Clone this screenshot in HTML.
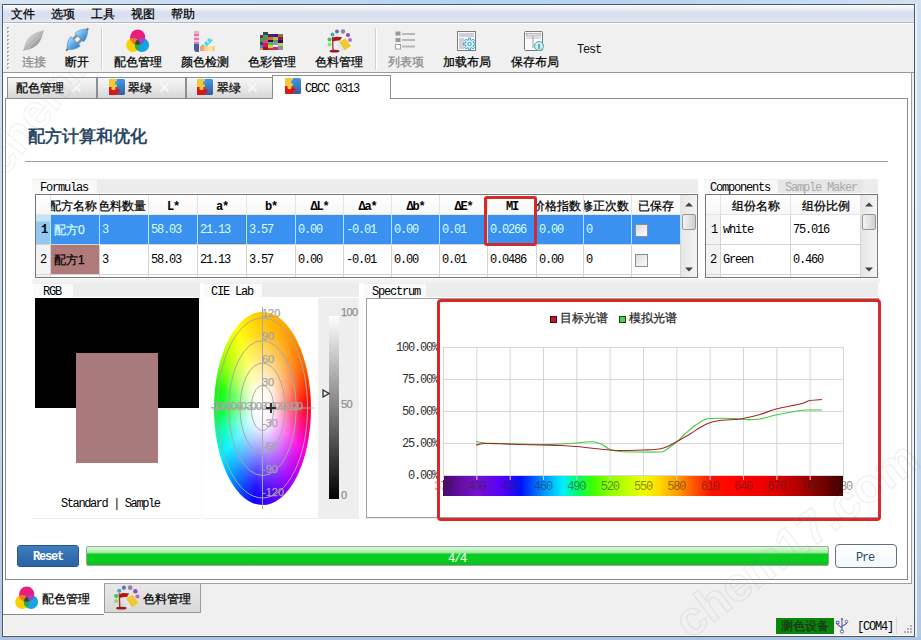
<!DOCTYPE html>
<html><head><meta charset="utf-8">
<style>
*{margin:0;padding:0;box-sizing:border-box}
html,body{width:921px;height:640px;overflow:hidden}
body{position:relative;background:#cfe0f2;font-family:"Liberation Sans",sans-serif;font-size:12px;color:#000}
.a{position:absolute}
.m{font-family:"Liberation Mono",monospace;-webkit-text-stroke:0 !important}
.t{white-space:nowrap;line-height:1;-webkit-text-stroke:0.25px currentColor}
</style></head><body>
<!-- window frame -->
<div class="a" style="left:0;top:0;width:921px;height:640px;background:linear-gradient(#cfe0f2 0,#c8dcf0 60%,#b0c8e4 100%)"></div>
<div class="a" style="left:0;top:0;width:921px;height:4px;background:linear-gradient(90deg,#d6e6f4 0,#c2daf2 25%,#b4d4f6 50%,#bcd6f2 75%,#d0e2f4 100%)"></div>
<div class="a" style="left:0;top:637px;width:921px;height:3px;background:#a8c4e2"></div>
<div class="a" style="left:2px;top:4px;width:913px;height:633px;border:1px solid #4e5a66;background:#f0f0f0;box-shadow:inset 1px 0 0 #fcfcfc,inset 0 -1px 0 #fafafa"></div>
<div class="a" style="left:915px;top:4px;width:2px;height:633px;background:#e6f2fc"></div>
<!-- menu bar -->
<div class="a" style="left:3px;top:5px;width:911px;height:17px;background:linear-gradient(#fbfbfd 0,#f2f3f9 3px,#dfe3f1 6px,#d6ddee 9px,#dce1f0 13px,#e6e9f4 17px)"></div>
<div class="a" style="left:3px;top:22px;width:911px;height:1px;background:#b4b8c4"></div>
<div class="a" style="left:3px;top:23px;width:911px;height:1px;background:#fcfcfc"></div>
<div class="a t" style="left:11px;top:8px">文件</div><div class="a t" style="left:51px;top:8px">选项</div><div class="a t" style="left:91px;top:8px">工具</div><div class="a t" style="left:131px;top:8px">视图</div><div class="a t" style="left:171px;top:8px">帮助</div>
<!-- toolbar -->
<div class="a" style="left:3px;top:72px;width:911px;height:1px;background:#9a9a9a"></div>
<div class="a" style="left:7px;top:27px;width:2px;height:44px;background:repeating-linear-gradient(#a4a4a4 0 2px,transparent 2px 4px)"></div>
<div class="a" style="left:8px;top:28px;width:2px;height:44px;background:repeating-linear-gradient(rgba(255,255,255,.8) 0 1px,transparent 1px 4px)"></div>
<div class="a" style="left:101px;top:28px;width:1px;height:42px;background:#d2d2d2"></div><div class="a" style="left:102px;top:28px;width:1px;height:42px;background:#fff"></div>
<div class="a" style="left:375px;top:28px;width:1px;height:42px;background:#d2d2d2"></div><div class="a" style="left:376px;top:28px;width:1px;height:42px;background:#fff"></div>
<div class="a t" style="left:22px;top:56px;color:#8a8a8a">连接</div>
<div class="a t" style="left:65px;top:56px;color:#000">断开</div>
<div class="a t" style="left:114px;top:56px;color:#000">配色管理</div>
<div class="a t" style="left:181px;top:56px;color:#000">颜色检测</div>
<div class="a t" style="left:248px;top:56px;color:#000">色彩管理</div>
<div class="a t" style="left:315px;top:56px;color:#000">色料管理</div>
<div class="a t" style="left:388px;top:56px;color:#8a8a8a">列表项</div>
<div class="a t" style="left:443px;top:56px;color:#000">加载布局</div>
<div class="a t" style="left:511px;top:56px;color:#000">保存布局</div>
<div class="a t m" style="left:577px;top:44px;font-size:12px;font-weight:normal;letter-spacing:-1.2px;color:#101010">Test</div>
<svg class="a" style="left:15px;top:24px" width="80" height="32" viewBox="15 24 80 32">
<defs><linearGradient id="gl" x1="0" y1="0" x2="0" y2="1"><stop offset="0" stop-color="#d0d0d0"/><stop offset=".5" stop-color="#b4b4b4"/><stop offset="1" stop-color="#9c9c9c"/></linearGradient>
<linearGradient id="gb" x1="0" y1="0" x2="0" y2="1"><stop offset="0" stop-color="#a8d8fa"/><stop offset=".5" stop-color="#62acea"/><stop offset="1" stop-color="#3a80c8"/></linearGradient></defs>
<g transform="translate(33.5 40.5) rotate(-45)"><path d="M-15,0 C-11,-1 -8,-5.5 0,-5.5 C7,-5.5 10,-2 15,0 C10,2 7,5.5 0,5.5 C-8,5.5 -11,1 -15,0Z" fill="url(#gl)"/>
<path d="M-11 -1.5 H10 M-10 1.5 H11" stroke="#c8c8c8" stroke-width=".8"/></g>
<g transform="translate(77 39.75) rotate(-45)">
<rect x="-3" y="-4.5" width="7" height="2.6" fill="#8c8c8c"/><rect x="-3" y="1.9" width="7" height="2.6" fill="#8c8c8c"/>
<path d="M3,-6 L3,6 C8,6 12,3 14,1 L15.5,0 L14,-1 C12,-3 8,-6 3,-6Z" fill="url(#gb)" stroke="#4a88c0" stroke-width=".6"/>
<path d="M-2,-6.5 L-2,6.5 C-7,6.5 -11,3 -13,1 L-15,0 L-13,-1 C-11,-3 -7,-6.5 -2,-6.5Z" fill="url(#gb)" stroke="#4a88c0" stroke-width=".6"/>
<path d="M14 0 H16" stroke="#607080" stroke-width="1.6"/><path d="M-13.5 0 H-15.5" stroke="#607080" stroke-width="1.6"/>
</g>
</svg>

<svg class="a" style="left:125px;top:28px" width="26" height="25" viewBox="0 0 26 25">
<defs><clipPath id="cm"><circle cx="12.7" cy="9.2" r="7.6"/></clipPath><clipPath id="cy"><circle cx="8.2" cy="17" r="7.1"/></clipPath></defs>
<circle cx="8.2" cy="17" r="7.1" fill="#fcd000"/>
<circle cx="17" cy="17" r="7.1" fill="#16a4e4"/>
<circle cx="12.7" cy="9.2" r="7.6" fill="#ea1e7e"/>
<g clip-path="url(#cm)"><circle cx="8.2" cy="17" r="7.1" fill="#f47a20"/><circle cx="17" cy="17" r="7.1" fill="#9a48c8"/></g>
<g clip-path="url(#cy)"><circle cx="17" cy="17" r="7.1" fill="#20b048"/></g>
<g clip-path="url(#cm)"><g clip-path="url(#cy)"><circle cx="17" cy="17" r="7.1" fill="#404040"/></g></g>
</svg>
<svg class="a" style="left:192px;top:30px" width="26" height="23" viewBox="0 0 26 23">
<path d="M2 1 H7 V22 H5.5 C3 22 2 20.5 2 18 Z" fill="#e07ab0"/>
<rect x="2" y="1" width="5" height="3" fill="#f0a8cc"/><rect x="2" y="6" width="5" height="2" fill="#f6c6dc"/><rect x="2" y="10" width="5" height="2" fill="#f6c6dc"/>
<path d="M2 14 H7 V22 H5.5 C3 22 2 20.5 2 18 Z" fill="#4a5aa0"/>
<path d="M8 17 L18 7 L21 10 L11 20 Z" fill="#58d0e6"/>
<path d="M10.5 12.5 L13.5 15.5 M13.5 9.5 L16.5 12.5 M16.5 6.5 L19.5 9.5" stroke="#e8f8fc" stroke-width="1.2"/>
<rect x="8" y="16" width="15" height="5" fill="#f8d090"/><rect x="8" y="16" width="4" height="5" fill="#f4a070"/><rect x="16" y="16" width="4" height="5" fill="#f8e8a0"/>
</svg>
<svg class="a" style="left:258px;top:30px" width="28" height="22" viewBox="258 30 28 22"><rect x="260" y="35" width="3" height="3" fill="#8a2060"/><rect x="260" y="38" width="3" height="4" fill="#40a040"/><rect x="260" y="42" width="3" height="3" fill="#206040"/><rect x="260" y="45" width="3" height="3" fill="#4090d0"/><rect x="260" y="48" width="3" height="2" fill="#d8a050"/><rect x="263" y="32" width="5" height="3" fill="#305040"/><rect x="263" y="35" width="5" height="5" fill="#40a050"/><rect x="263" y="40" width="5" height="3" fill="#e040a0"/><rect x="263" y="43" width="5" height="4" fill="#e01060"/><rect x="263" y="47" width="5" height="3" fill="#a01020"/><rect x="268" y="34" width="5" height="3" fill="#502070"/><rect x="268" y="37" width="5" height="3" fill="#e06030"/><rect x="268" y="40" width="5" height="2" fill="#400820"/><rect x="268" y="42" width="5" height="3" fill="#40c070"/><rect x="268" y="45" width="5" height="3" fill="#d0d030"/><rect x="268" y="48" width="5" height="2" fill="#c04020"/><rect x="273" y="34" width="5" height="3" fill="#4010a0"/><rect x="273" y="37" width="5" height="3" fill="#b0c040"/><rect x="273" y="40" width="5" height="2" fill="#40b040"/><rect x="273" y="42" width="5" height="3" fill="#b080d0"/><rect x="273" y="45" width="5" height="2" fill="#e8e8f8"/><rect x="273" y="47" width="5" height="3" fill="#c03060"/><rect x="278" y="34" width="5" height="3" fill="#907040"/><rect x="278" y="37" width="5" height="3" fill="#802040"/><rect x="278" y="40" width="5" height="3" fill="#400060"/><rect x="278" y="43" width="5" height="3" fill="#a0e060"/><rect x="278" y="46" width="5" height="4" fill="#909090"/></svg>
<svg class="a" style="left:326px;top:28px" width="26" height="25" viewBox="0 0 26 25"><circle cx="6.5" cy="6.5" r="2" fill="#4aa8b0"/><circle cx="11" cy="3.5" r="2" fill="#6a70a8"/><circle cx="17" cy="3.5" r="2.2" fill="#8a84a8"/><circle cx="22" cy="7" r="2.1" fill="#8a50b8"/><circle cx="24" cy="12" r="2" fill="#b070c0"/>
<circle cx="3.5" cy="11.5" r="2" fill="#40c060"/><circle cx="3.5" cy="16.5" r="2" fill="#90e060"/>
<path d="M6.5 9 L7 22" stroke="#983030" stroke-width="1.3"/>
<path d="M7 9.5 C10 8 13 9 16 9 L14 12.5 C11 12.5 9 12.5 7 13.5 Z" fill="#b81414"/>
<path d="M13 14 L19.5 10.5 L25 18 L18.5 22.5 Z" fill="#f0c830"/><path d="M13 14 L18.5 22.5 L15 23.5 L10.5 16Z" fill="#e4e4ec"/>
<ellipse cx="8.5" cy="23.2" rx="5" ry="1.4" fill="#a01424"/></svg>
<svg class="a" style="left:394px;top:30px" width="23" height="21" viewBox="0 0 23 21">
<rect x="1.5" y="1.5" width="5" height="4" fill="#9a9a9a"/><rect x="1.5" y="8" width="5" height="4" fill="#9a9a9a"/><rect x="1.5" y="14.5" width="5" height="4.5" fill="#fff" stroke="#a0a0a0"/>
<rect x="8" y="3" width="13" height="2" fill="#b8b8b8"/><rect x="8" y="9" width="13" height="2" fill="#b8b8b8"/><rect x="8" y="15.5" width="13" height="2" fill="#b8b8b8"/>
</svg>
<svg class="a" style="left:456px;top:30px" width="22" height="22" viewBox="0 0 22 22">
<rect x="1.5" y="1.5" width="18" height="19" fill="#fafafa" stroke="#7c7c7c"/>
<rect x="3" y="3" width="15" height="4" fill="#cfcfdc"/><rect x="3" y="8" width="5" height="11" fill="#cfcfdc"/>
<path d="M17.79 13.04 L19.42 13.04 L19.42 14.96 L17.79 14.96 L17.22 16.36 L18.36 17.51 L17.01 18.86 L15.86 17.72 L14.46 18.29 L14.46 19.92 L12.54 19.92 L12.54 18.29 L11.14 17.72 L9.99 18.86 L8.64 17.51 L9.78 16.36 L9.21 14.96 L7.58 14.96 L7.58 13.04 L9.21 13.04 L9.78 11.64 L8.64 10.49 L9.99 9.14 L11.14 10.28 L12.54 9.71 L12.54 8.08 L14.46 8.08 L14.46 9.71 L15.86 10.28 L17.01 9.14 L18.36 10.49 L17.22 11.64Z" fill="#d2f0fa" stroke="#3a9cc0" stroke-width="1"/>
<circle cx="13.5" cy="14" r="1.7" fill="#fff" stroke="#3a9cc0" stroke-width="1"/>
</svg>
<svg class="a" style="left:523px;top:30px" width="23" height="22" viewBox="0 0 23 22">
<rect x="1.5" y="1.5" width="18" height="19" rx="1" fill="#fafafa" stroke="#7a7a7a"/>
<rect x="3.5" y="3.5" width="14" height="2.5" fill="#e0e0e8" stroke="#9a9a9a" stroke-width=".6"/><path d="M10 6 V18" stroke="#9a9a9a"/><path d="M3.5 8 H17.5" stroke="#9a9a9a" stroke-width=".6"/>
<circle cx="16" cy="16" r="4.5" fill="#c8f0f0" stroke="#50a8a8"/><path d="M16 14 V19" stroke="#407878" stroke-width="1.2"/>
</svg>
<!-- main white area -->
<div class="a" style="left:3px;top:73px;width:909px;height:511px;background:#fff;border-right:1px solid #a0a0a0;border-bottom:1px solid #a0a0a0"></div>

<div class="a" style="left:5px;top:98px;width:903px;height:482px;border:1px solid #8a8a8a;background:#fff"></div>
<div class="a" style="left:7px;top:77px;width:90px;height:21px;border:1px solid #8c8e94;border-bottom:none;background:linear-gradient(#f6f6f6,#e8e8e8 50%,#d6d6d6)"><div class="a t" style="left:8px;top:4px">配色管理</div></div>
<div class="a" style="left:97px;top:77px;width:89px;height:21px;border:1px solid #8c8e94;border-bottom:none;background:linear-gradient(#f6f6f6,#e8e8e8 50%,#d6d6d6)"><div class="a t" style="left:30px;top:4px">翠绿</div></div>
<svg class="a" style="left:109px;top:79px" width="16" height="16" viewBox="0 0 16 16">
<defs><clipPath id="pz1"><rect x="0" y="0" width="16" height="16" rx="1.5"/></clipPath><linearGradient id="pb1" x1="0" y1="0" x2="0" y2="1"><stop offset="0" stop-color="#3a9ae0"/><stop offset="1" stop-color="#3a5aa8"/></linearGradient></defs>
<g clip-path="url(#pz1)">
<rect x="0" y="0" width="16" height="16" fill="url(#pb1)"/>
<rect x="0" y="0" width="8" height="8" fill="#f4c838"/>
<rect x="0" y="8" width="8" height="8" fill="#d81818"/>
<circle cx="4.5" cy="9" r="2.2" fill="#f4c838"/>
<circle cx="8.5" cy="12" r="2" fill="#d81818"/>
<circle cx="8" cy="4" r="2" fill="#3a96dc"/>
</g></svg>
<div class="a" style="left:186px;top:77px;width:87px;height:21px;border:1px solid #8c8e94;border-bottom:none;background:linear-gradient(#f6f6f6,#e8e8e8 50%,#d6d6d6)"><div class="a t" style="left:30px;top:4px">翠绿</div></div>
<svg class="a" style="left:197px;top:79px" width="16" height="16" viewBox="0 0 16 16">
<defs><clipPath id="pz2"><rect x="0" y="0" width="16" height="16" rx="1.5"/></clipPath><linearGradient id="pb2" x1="0" y1="0" x2="0" y2="1"><stop offset="0" stop-color="#3a9ae0"/><stop offset="1" stop-color="#3a5aa8"/></linearGradient></defs>
<g clip-path="url(#pz2)">
<rect x="0" y="0" width="16" height="16" fill="url(#pb2)"/>
<rect x="0" y="0" width="8" height="8" fill="#f4c838"/>
<rect x="0" y="8" width="8" height="8" fill="#d81818"/>
<circle cx="4.5" cy="9" r="2.2" fill="#f4c838"/>
<circle cx="8.5" cy="12" r="2" fill="#d81818"/>
<circle cx="8" cy="4" r="2" fill="#3a96dc"/>
</g></svg>
<svg class="a" style="left:71px;top:82px" width="11" height="11"><path d="M1.5 1.5 L9.5 9.5 M9.5 1.5 L1.5 9.5" stroke="#fbfbfb" stroke-width="1.5"/></svg><svg class="a" style="left:159px;top:82px" width="11" height="11"><path d="M1.5 1.5 L9.5 9.5 M9.5 1.5 L1.5 9.5" stroke="#fbfbfb" stroke-width="1.5"/></svg><svg class="a" style="left:247px;top:82px" width="11" height="11"><path d="M1.5 1.5 L9.5 9.5 M9.5 1.5 L1.5 9.5" stroke="#fbfbfb" stroke-width="1.5"/></svg><div class="a" style="left:272px;top:75px;width:119px;height:24px;border:1px solid #8c8e94;border-bottom:none;background:#fff"></div>
<svg class="a" style="left:285px;top:78px" width="16" height="16" viewBox="0 0 16 16">
<defs><clipPath id="pz3"><rect x="0" y="0" width="16" height="16" rx="1.5"/></clipPath><linearGradient id="pb3" x1="0" y1="0" x2="0" y2="1"><stop offset="0" stop-color="#3a9ae0"/><stop offset="1" stop-color="#3a5aa8"/></linearGradient></defs>
<g clip-path="url(#pz3)">
<rect x="0" y="0" width="16" height="16" fill="url(#pb3)"/>
<rect x="0" y="0" width="8" height="8" fill="#f4c838"/>
<rect x="0" y="8" width="8" height="8" fill="#d81818"/>
<circle cx="4.5" cy="9" r="2.2" fill="#f4c838"/>
<circle cx="8.5" cy="12" r="2" fill="#d81818"/>
<circle cx="8" cy="4" r="2" fill="#3a96dc"/>
</g></svg>
<div class="a t m" style="left:305px;top:83px;font-size:12px;letter-spacing:-1.2px">CBCC 0313</div>
<div class="a t" style="left:28px;top:128px;font-size:17px;font-weight:bold;color:#2a4866;letter-spacing:0px;-webkit-text-stroke:0">配方计算和优化</div>
<div class="a" style="left:25px;top:161px;width:863px;height:1px;background:#9c9c9c"></div>
<div class="a" style="left:32px;top:179px;width:666px;height:1px;background:#ececec"></div>
<div class="a" style="left:32px;top:180px;width:666px;height:13px;background:#ececec"></div>
<div class="a" style="left:32px;top:180px;width:65px;height:13px;background:#f9f9f9"></div>
<div class="a t" style="left:40px;top:182px;font-family:'Liberation Mono',monospace;letter-spacing:-1.2px;font-size:12px;-webkit-text-stroke:0">Formulas</div>
<div class="a" style="left:704px;top:179px;width:174px;height:1px;background:#ececec"></div>
<div class="a" style="left:704px;top:180px;width:174px;height:13px;background:#ececec"></div>
<div class="a" style="left:704px;top:180px;width:73px;height:13px;background:#f9f9f9"></div>
<div class="a t" style="left:710px;top:182px;font-family:'Liberation Mono',monospace;letter-spacing:-1.2px;font-size:12px;-webkit-text-stroke:0">Components</div>
<div class="a" style="left:779px;top:180px;width:84px;height:13px;background:#e6e6e6"></div>
<div class="a t" style="left:785px;top:182px;font-family:'Liberation Mono',monospace;letter-spacing:-1.2px;font-size:12px;-webkit-text-stroke:0;color:#a8a8a8">Sample Maker</div>
<div class="a" style="left:35px;top:194px;width:663px;height:84px;border:1px solid #767676;background:#fff"></div>
<div class="a" style="left:36px;top:195px;width:644px;height:19px;background:linear-gradient(#fff,#f7f7f7)"></div>
<div class="a" style="left:36px;top:214px;width:644px;height:1px;background:#dfe6ee"></div>
<div class="a" style="left:36px;top:215px;width:14px;height:62px;background:#f3f3f3"></div>
<div class="a" style="left:50px;top:215px;width:630px;height:29px;background:#3b91ef"></div>
<div class="a" style="left:36px;top:215px;width:14px;height:29px;background:linear-gradient(#c6e3f8 0,#c6e3f8 6px,#93c9f0 7px,#93c9f0)"></div>
<div class="a" style="left:36px;top:244px;width:644px;height:1px;background:#d4d4d4"></div>
<div class="a t" style="left:41px;top:224px;font-family:'Liberation Mono',monospace;letter-spacing:-1.2px;font-size:12px;-webkit-text-stroke:0;font-weight:bold">1</div>
<div class="a t" style="left:54px;top:224px;color:#d2ffff">配方0</div>
<div class="a t" style="left:102px;top:224px;font-family:'Liberation Mono',monospace;letter-spacing:-1.2px;font-size:12px;-webkit-text-stroke:0;color:#d2ffff">3</div>
<div class="a t" style="left:151px;top:224px;font-family:'Liberation Mono',monospace;letter-spacing:-1.2px;font-size:12px;-webkit-text-stroke:0;color:#d2ffff">58.03</div>
<div class="a t" style="left:200px;top:224px;font-family:'Liberation Mono',monospace;letter-spacing:-1.2px;font-size:12px;-webkit-text-stroke:0;color:#d2ffff">21.13</div>
<div class="a t" style="left:249px;top:224px;font-family:'Liberation Mono',monospace;letter-spacing:-1.2px;font-size:12px;-webkit-text-stroke:0;color:#d2ffff">3.57</div>
<div class="a t" style="left:298px;top:224px;font-family:'Liberation Mono',monospace;letter-spacing:-1.2px;font-size:12px;-webkit-text-stroke:0;color:#d2ffff">0.00</div>
<div class="a t" style="left:346px;top:224px;font-family:'Liberation Mono',monospace;letter-spacing:-1.2px;font-size:12px;-webkit-text-stroke:0;color:#d2ffff">-0.01</div>
<div class="a t" style="left:394px;top:224px;font-family:'Liberation Mono',monospace;letter-spacing:-1.2px;font-size:12px;-webkit-text-stroke:0;color:#d2ffff">0.00</div>
<div class="a t" style="left:442px;top:224px;font-family:'Liberation Mono',monospace;letter-spacing:-1.2px;font-size:12px;-webkit-text-stroke:0;color:#d2ffff">0.01</div>
<div class="a t" style="left:490px;top:224px;font-family:'Liberation Mono',monospace;letter-spacing:-1.2px;font-size:12px;-webkit-text-stroke:0;color:#d2ffff">0.0266</div>
<div class="a t" style="left:539px;top:224px;font-family:'Liberation Mono',monospace;letter-spacing:-1.2px;font-size:12px;-webkit-text-stroke:0;color:#d2ffff">0.00</div>
<div class="a t" style="left:586px;top:224px;font-family:'Liberation Mono',monospace;letter-spacing:-1.2px;font-size:12px;-webkit-text-stroke:0;color:#d2ffff">0</div>
<div class="a" style="left:635px;top:224px;width:13px;height:13px;border:1px solid #8e8f8f;background:linear-gradient(135deg,#dcdcdc,#fbfbfb)"></div>
<div class="a" style="left:198px;top:215px;width:48px;height:29px;border:1px solid #4f7fb4"></div>
<div class="a" style="left:36px;top:274px;width:644px;height:1px;background:#d4d4d4"></div>
<div class="a t" style="left:40px;top:254px;font-family:'Liberation Mono',monospace;letter-spacing:-1.2px;font-size:12px;-webkit-text-stroke:0;font-weight:normal">2</div>
<div class="a" style="left:51px;top:245px;width:48px;height:29px;background:#b07a7b"></div>
<div class="a t" style="left:54px;top:254px;color:#000">配方1</div>
<div class="a t" style="left:102px;top:254px;font-family:'Liberation Mono',monospace;letter-spacing:-1.2px;font-size:12px;-webkit-text-stroke:0;color:#000">3</div>
<div class="a t" style="left:151px;top:254px;font-family:'Liberation Mono',monospace;letter-spacing:-1.2px;font-size:12px;-webkit-text-stroke:0;color:#000">58.03</div>
<div class="a t" style="left:200px;top:254px;font-family:'Liberation Mono',monospace;letter-spacing:-1.2px;font-size:12px;-webkit-text-stroke:0;color:#000">21.13</div>
<div class="a t" style="left:249px;top:254px;font-family:'Liberation Mono',monospace;letter-spacing:-1.2px;font-size:12px;-webkit-text-stroke:0;color:#000">3.57</div>
<div class="a t" style="left:298px;top:254px;font-family:'Liberation Mono',monospace;letter-spacing:-1.2px;font-size:12px;-webkit-text-stroke:0;color:#000">0.00</div>
<div class="a t" style="left:346px;top:254px;font-family:'Liberation Mono',monospace;letter-spacing:-1.2px;font-size:12px;-webkit-text-stroke:0;color:#000">-0.01</div>
<div class="a t" style="left:394px;top:254px;font-family:'Liberation Mono',monospace;letter-spacing:-1.2px;font-size:12px;-webkit-text-stroke:0;color:#000">0.00</div>
<div class="a t" style="left:442px;top:254px;font-family:'Liberation Mono',monospace;letter-spacing:-1.2px;font-size:12px;-webkit-text-stroke:0;color:#000">0.01</div>
<div class="a t" style="left:490px;top:254px;font-family:'Liberation Mono',monospace;letter-spacing:-1.2px;font-size:12px;-webkit-text-stroke:0;color:#000">0.0486</div>
<div class="a t" style="left:539px;top:254px;font-family:'Liberation Mono',monospace;letter-spacing:-1.2px;font-size:12px;-webkit-text-stroke:0;color:#000">0.00</div>
<div class="a t" style="left:586px;top:254px;font-family:'Liberation Mono',monospace;letter-spacing:-1.2px;font-size:12px;-webkit-text-stroke:0;color:#000">0</div>
<div class="a" style="left:635px;top:254px;width:13px;height:13px;border:1px solid #8e8f8f;background:linear-gradient(135deg,#dcdcdc,#fbfbfb)"></div>
<div class="a" style="left:50px;top:195px;width:1px;height:20px;background:#e4e4e4"></div>
<div class="a" style="left:50px;top:215px;width:1px;height:62px;background:#d4d4d4"></div>
<div class="a" style="left:50px;top:215px;width:1px;height:29px;background:#aeeaff"></div>
<div class="a" style="left:99px;top:195px;width:1px;height:20px;background:#e4e4e4"></div>
<div class="a" style="left:99px;top:215px;width:1px;height:62px;background:#d4d4d4"></div>
<div class="a" style="left:99px;top:215px;width:1px;height:29px;background:#aeeaff"></div>
<div class="a" style="left:148px;top:195px;width:1px;height:20px;background:#e4e4e4"></div>
<div class="a" style="left:148px;top:215px;width:1px;height:62px;background:#d4d4d4"></div>
<div class="a" style="left:148px;top:215px;width:1px;height:29px;background:#aeeaff"></div>
<div class="a" style="left:197px;top:195px;width:1px;height:20px;background:#e4e4e4"></div>
<div class="a" style="left:197px;top:215px;width:1px;height:62px;background:#d4d4d4"></div>
<div class="a" style="left:197px;top:215px;width:1px;height:29px;background:#aeeaff"></div>
<div class="a" style="left:246px;top:195px;width:1px;height:20px;background:#e4e4e4"></div>
<div class="a" style="left:246px;top:215px;width:1px;height:62px;background:#d4d4d4"></div>
<div class="a" style="left:246px;top:215px;width:1px;height:29px;background:#aeeaff"></div>
<div class="a" style="left:295px;top:195px;width:1px;height:20px;background:#e4e4e4"></div>
<div class="a" style="left:295px;top:215px;width:1px;height:62px;background:#d4d4d4"></div>
<div class="a" style="left:295px;top:215px;width:1px;height:29px;background:#aeeaff"></div>
<div class="a" style="left:343px;top:195px;width:1px;height:20px;background:#e4e4e4"></div>
<div class="a" style="left:343px;top:215px;width:1px;height:62px;background:#d4d4d4"></div>
<div class="a" style="left:343px;top:215px;width:1px;height:29px;background:#aeeaff"></div>
<div class="a" style="left:391px;top:195px;width:1px;height:20px;background:#e4e4e4"></div>
<div class="a" style="left:391px;top:215px;width:1px;height:62px;background:#d4d4d4"></div>
<div class="a" style="left:391px;top:215px;width:1px;height:29px;background:#aeeaff"></div>
<div class="a" style="left:439px;top:195px;width:1px;height:20px;background:#e4e4e4"></div>
<div class="a" style="left:439px;top:215px;width:1px;height:62px;background:#d4d4d4"></div>
<div class="a" style="left:439px;top:215px;width:1px;height:29px;background:#aeeaff"></div>
<div class="a" style="left:487px;top:195px;width:1px;height:20px;background:#e4e4e4"></div>
<div class="a" style="left:487px;top:215px;width:1px;height:62px;background:#d4d4d4"></div>
<div class="a" style="left:487px;top:215px;width:1px;height:29px;background:#aeeaff"></div>
<div class="a" style="left:536px;top:195px;width:1px;height:20px;background:#e4e4e4"></div>
<div class="a" style="left:536px;top:215px;width:1px;height:62px;background:#d4d4d4"></div>
<div class="a" style="left:536px;top:215px;width:1px;height:29px;background:#aeeaff"></div>
<div class="a" style="left:583px;top:195px;width:1px;height:20px;background:#e4e4e4"></div>
<div class="a" style="left:583px;top:215px;width:1px;height:62px;background:#d4d4d4"></div>
<div class="a" style="left:583px;top:215px;width:1px;height:29px;background:#aeeaff"></div>
<div class="a" style="left:631px;top:195px;width:1px;height:20px;background:#e4e4e4"></div>
<div class="a" style="left:631px;top:215px;width:1px;height:62px;background:#d4d4d4"></div>
<div class="a" style="left:631px;top:215px;width:1px;height:29px;background:#aeeaff"></div>
<div class="a" style="left:680px;top:195px;width:1px;height:20px;background:#e4e4e4"></div>
<div class="a" style="left:680px;top:215px;width:1px;height:62px;background:#d4d4d4"></div>
<div class="a" style="left:680px;top:215px;width:1px;height:29px;background:#aeeaff"></div>
<div class="a" style="left:51px;top:195px;width:48px;height:19px;overflow:hidden"><div class="t" style="position:absolute;right:2px;top:5px">配方名称</div></div>
<div class="a" style="left:100px;top:195px;width:48px;height:19px;overflow:hidden"><div class="t" style="position:absolute;right:2px;top:5px">色料数量</div></div>
<div class="a" style="left:149px;top:195px;width:48px;height:19px;overflow:hidden"><div class="t" style="position:absolute;left:50%;top:6px;transform:translateX(-50%);font-family:'Liberation Mono',monospace;letter-spacing:-1.2px;font-size:12px;-webkit-text-stroke:0;font-weight:bold">L*</div></div>
<div class="a" style="left:198px;top:195px;width:48px;height:19px;overflow:hidden"><div class="t" style="position:absolute;left:50%;top:6px;transform:translateX(-50%);font-family:'Liberation Mono',monospace;letter-spacing:-1.2px;font-size:12px;-webkit-text-stroke:0;font-weight:bold">a*</div></div>
<div class="a" style="left:247px;top:195px;width:48px;height:19px;overflow:hidden"><div class="t" style="position:absolute;left:50%;top:6px;transform:translateX(-50%);font-family:'Liberation Mono',monospace;letter-spacing:-1.2px;font-size:12px;-webkit-text-stroke:0;font-weight:bold">b*</div></div>
<div class="a" style="left:296px;top:195px;width:47px;height:19px;overflow:hidden"><div class="t" style="position:absolute;left:50%;top:6px;transform:translateX(-50%);font-family:'Liberation Mono',monospace;letter-spacing:-1.2px;font-size:12px;-webkit-text-stroke:0;font-weight:bold">ΔL*</div></div>
<div class="a" style="left:344px;top:195px;width:47px;height:19px;overflow:hidden"><div class="t" style="position:absolute;left:50%;top:6px;transform:translateX(-50%);font-family:'Liberation Mono',monospace;letter-spacing:-1.2px;font-size:12px;-webkit-text-stroke:0;font-weight:bold">Δa*</div></div>
<div class="a" style="left:392px;top:195px;width:47px;height:19px;overflow:hidden"><div class="t" style="position:absolute;left:50%;top:6px;transform:translateX(-50%);font-family:'Liberation Mono',monospace;letter-spacing:-1.2px;font-size:12px;-webkit-text-stroke:0;font-weight:bold">Δb*</div></div>
<div class="a" style="left:440px;top:195px;width:47px;height:19px;overflow:hidden"><div class="t" style="position:absolute;left:50%;top:6px;transform:translateX(-50%);font-family:'Liberation Mono',monospace;letter-spacing:-1.2px;font-size:12px;-webkit-text-stroke:0;font-weight:bold">ΔE*</div></div>
<div class="a" style="left:488px;top:195px;width:48px;height:19px;overflow:hidden"><div class="t" style="position:absolute;left:50%;top:6px;transform:translateX(-50%);font-family:'Liberation Mono',monospace;letter-spacing:-1.2px;font-size:12px;-webkit-text-stroke:0;font-weight:bold">MI</div></div>
<div class="a" style="left:537px;top:195px;width:46px;height:19px;overflow:hidden"><div class="t" style="position:absolute;right:2px;top:5px">价格指数</div></div>
<div class="a" style="left:584px;top:195px;width:47px;height:19px;overflow:hidden"><div class="t" style="position:absolute;right:2px;top:5px">修正次数</div></div>
<div class="a" style="left:632px;top:195px;width:48px;height:19px;overflow:hidden"><div class="t" style="position:absolute;left:50%;top:5px;transform:translateX(-50%);">已保存</div></div>
<div class="a" style="left:681px;top:195px;width:16px;height:82px;background:linear-gradient(90deg,#e6e6e6,#f4f4f4)"></div>
<svg class="a" style="left:685px;top:202px" width="8" height="5"><path d="M0 4.5 L4 0.5 L8 4.5Z" fill="#404040"/></svg>
<svg class="a" style="left:685px;top:267px" width="8" height="5"><path d="M0 0.5 L4 4.5 L8 0.5Z" fill="#404040"/></svg>
<div class="a" style="left:682px;top:214px;width:14px;height:16px;border:1px solid #979797;border-radius:2px;background:linear-gradient(90deg,#f2f2f2,#e2e2e2 50%,#cfcfcf)"></div>
<div class="a" style="left:705px;top:194px;width:173px;height:84px;border:1px solid #767676;background:#fff"></div>
<div class="a" style="left:706px;top:195px;width:154px;height:19px;background:linear-gradient(#fff,#f7f7f7)"></div>
<div class="a" style="left:706px;top:214px;width:154px;height:1px;background:#dfe6ee"></div>
<div class="a" style="left:706px;top:215px;width:14px;height:62px;background:#f3f3f3"></div>
<div class="a" style="left:706px;top:244px;width:154px;height:1px;background:#d4d4d4"></div>
<div class="a t" style="left:711px;top:224px;font-family:'Liberation Mono',monospace;letter-spacing:-1.2px;font-size:12px;-webkit-text-stroke:0;font-weight:normal">1</div>
<div class="a t" style="left:723px;top:224px;font-family:'Liberation Mono',monospace;letter-spacing:-1.2px;font-size:12px;-webkit-text-stroke:0;color:#000">white</div>
<div class="a t" style="left:793px;top:224px;font-family:'Liberation Mono',monospace;letter-spacing:-1.2px;font-size:12px;-webkit-text-stroke:0;color:#000">75.016</div>
<div class="a" style="left:706px;top:274px;width:154px;height:1px;background:#d4d4d4"></div>
<div class="a t" style="left:710px;top:254px;font-family:'Liberation Mono',monospace;letter-spacing:-1.2px;font-size:12px;-webkit-text-stroke:0;font-weight:normal">2</div>
<div class="a t" style="left:723px;top:254px;font-family:'Liberation Mono',monospace;letter-spacing:-1.2px;font-size:12px;-webkit-text-stroke:0;color:#000">Green</div>
<div class="a t" style="left:793px;top:254px;font-family:'Liberation Mono',monospace;letter-spacing:-1.2px;font-size:12px;-webkit-text-stroke:0;color:#000">0.460</div>
<div class="a" style="left:720px;top:195px;width:1px;height:20px;background:#e4e4e4"></div>
<div class="a" style="left:720px;top:215px;width:1px;height:62px;background:#d4d4d4"></div>
<div class="a" style="left:790px;top:195px;width:1px;height:20px;background:#e4e4e4"></div>
<div class="a" style="left:790px;top:215px;width:1px;height:62px;background:#d4d4d4"></div>
<div class="a" style="left:860px;top:195px;width:1px;height:20px;background:#e4e4e4"></div>
<div class="a" style="left:860px;top:215px;width:1px;height:62px;background:#d4d4d4"></div>
<div class="a" style="left:721px;top:195px;width:69px;height:19px;overflow:hidden"><div class="t" style="position:absolute;left:50%;top:5px;transform:translateX(-50%);">组份名称</div></div>
<div class="a" style="left:791px;top:195px;width:69px;height:19px;overflow:hidden"><div class="t" style="position:absolute;left:50%;top:5px;transform:translateX(-50%);">组份比例</div></div>
<div class="a" style="left:861px;top:195px;width:16px;height:82px;background:linear-gradient(90deg,#e6e6e6,#f4f4f4)"></div>
<svg class="a" style="left:865px;top:202px" width="8" height="5"><path d="M0 4.5 L4 0.5 L8 4.5Z" fill="#404040"/></svg>
<svg class="a" style="left:865px;top:267px" width="8" height="5"><path d="M0 0.5 L4 4.5 L8 0.5Z" fill="#404040"/></svg>
<div class="a" style="left:862px;top:214px;width:14px;height:16px;border:1px solid #979797;border-radius:2px;background:linear-gradient(90deg,#f2f2f2,#e2e2e2 50%,#cfcfcf)"></div>
<div class="a" style="left:484px;top:196px;width:53px;height:50px;border:3px solid #d42a2a;border-radius:3px"></div>
<div class="a" style="left:32px;top:279px;width:848px;height:4px;background:#f2f2f2"></div>
<div class="a" style="left:33px;top:283px;width:167px;height:14px;background:#ececec"></div>
<div class="a" style="left:33px;top:284px;width:40px;height:13px;background:#fafafa"></div>
<div class="a t" style="left:43px;top:286px;font-family:'Liberation Mono',monospace;letter-spacing:-1.2px;font-size:12px;-webkit-text-stroke:0">RGB</div>
<div class="a" style="left:204px;top:283px;width:155px;height:14px;background:#ececec"></div>
<div class="a" style="left:204px;top:284px;width:58px;height:13px;background:#fafafa"></div>
<div class="a t" style="left:211px;top:286px;font-family:'Liberation Mono',monospace;letter-spacing:-1.2px;font-size:12px;-webkit-text-stroke:0">CIE Lab</div>
<div class="a" style="left:364px;top:283px;width:514px;height:14px;background:#ececec"></div>
<div class="a" style="left:364px;top:284px;width:62px;height:13px;background:#fafafa"></div>
<div class="a t" style="left:372px;top:286px;font-family:'Liberation Mono',monospace;letter-spacing:-1.2px;font-size:12px;-webkit-text-stroke:0">Spectrum</div>
<div class="a" style="left:32px;top:518px;width:848px;height:1px;background:#ececec"></div>
<div class="a" style="left:200px;top:298px;width:4px;height:221px;background:#fcfcfc"></div>
<div class="a" style="left:360px;top:298px;width:4px;height:221px;background:#fcfcfc"></div>
<div class="a" style="left:35px;top:298px;width:164px;height:110px;background:#000"></div>
<div class="a" style="left:76px;top:353px;width:82px;height:110px;background:#a87a7c"></div>
<div class="a t" style="left:61px;top:498px;font-family:'Liberation Mono',monospace;letter-spacing:-1.2px;font-size:12px;-webkit-text-stroke:0;letter-spacing:-1.4px">Standard | Sample</div>
<div class="a" style="left:318px;top:298px;width:41px;height:220px;background:#eeeeee"></div>
<div class="a" style="left:329px;top:316px;width:10px;height:183px;background:linear-gradient(#ffffff,#808080 50%,#000)"></div>
<div class="a t" style="left:341px;top:307px;font-size:11px;letter-spacing:-0.6px;color:#8e8e8e;font-family:'Liberation Sans',sans-serif">100</div>
<div class="a t" style="left:341px;top:399px;font-size:11px;letter-spacing:-0.6px;color:#8e8e8e;font-family:'Liberation Sans',sans-serif">50</div>
<div class="a t" style="left:341px;top:490px;font-size:11px;color:#8e8e8e;font-family:'Liberation Sans',sans-serif">0</div>
<svg class="a" style="left:322px;top:389px" width="8" height="9"><path d="M1 1 L7 4.5 L1 8 Z" fill="none" stroke="#303030" stroke-width="1.3"/></svg>
<div class="a" style="left:214.0px;top:311.5px;width:97.0px;height:193.0px;border-radius:50%;background:radial-gradient(closest-side,#fff 0%,rgba(255,255,255,.92) 22%,rgba(255,255,255,.5) 50%,rgba(255,255,255,.12) 78%,rgba(255,255,255,0) 92%),conic-gradient(from 0deg,#ffc400 0deg,#ff9800 22deg,#ff4800 55deg,#ff0a00 80deg,#ff0070 110deg,#ff00e0 135deg,#a000ff 160deg,#1000ff 185deg,#00a0ff 205deg,#00f0ff 220deg,#00ffa0 245deg,#00ff30 265deg,#10ff00 295deg,#a0ff00 322deg,#ffff00 342deg,#ffc400 360deg)"></div>
<svg class="a" style="left:205px;top:300px" width="112" height="215" viewBox="205 300 112 215"><ellipse cx="262.5" cy="408" rx="11.25" ry="22.5" fill="none" stroke="#a8a8a8" stroke-width="1"/><ellipse cx="262.5" cy="408" rx="22.5" ry="45" fill="none" stroke="#a8a8a8" stroke-width="1"/><ellipse cx="262.5" cy="408" rx="33.75" ry="67.5" fill="none" stroke="#a8a8a8" stroke-width="1"/><ellipse cx="262.5" cy="408" rx="45.0" ry="90" fill="none" stroke="#a8a8a8" stroke-width="1"/><path d="M262.5 307 V509 M211 408 H314" stroke="#a8a8a8" stroke-width="1"/></svg>
<div class="a t" style="left:262px;top:308px;font-size:11px;color:#a4a4a4;font-family:'Liberation Sans',sans-serif">120</div>
<div class="a t" style="left:262px;top:331px;font-size:11px;color:#a4a4a4;font-family:'Liberation Sans',sans-serif">90</div>
<div class="a t" style="left:262px;top:354px;font-size:11px;color:#a4a4a4;font-family:'Liberation Sans',sans-serif">60</div>
<div class="a t" style="left:262px;top:377px;font-size:11px;color:#a4a4a4;font-family:'Liberation Sans',sans-serif">30</div>
<div class="a t" style="left:262px;top:418px;font-size:11px;color:#a4a4a4;font-family:'Liberation Sans',sans-serif">-30</div>
<div class="a t" style="left:262px;top:441px;font-size:11px;color:#a4a4a4;font-family:'Liberation Sans',sans-serif">-60</div>
<div class="a t" style="left:262px;top:464px;font-size:11px;color:#a4a4a4;font-family:'Liberation Sans',sans-serif">-90</div>
<div class="a t" style="left:262px;top:487px;font-size:11px;color:#a4a4a4;font-family:'Liberation Sans',sans-serif">-120</div>
<div class="a t" style="left:211px;top:401px;font-size:11px;color:#a4a4a4;font-family:'Liberation Sans',sans-serif;letter-spacing:-2px">-120-90-60-30 0 30 60 90 120</div>
<svg class="a" style="left:264px;top:401px" width="14" height="14"><path d="M2 7 H12 M7 2 V12" stroke="#303030" stroke-width="2"/></svg>
<div class="a" style="left:366px;top:298px;width:513px;height:220px;border:1px solid #a0a0a0;background:#fff"></div>

<svg class="a" style="left:0;top:0" width="921" height="640" viewBox="0 0 921 640"><defs><linearGradient id="spec" x1="0" x2="1" y1="0" y2="0"><stop offset="0.0000" stop-color="#4a0a70"/><stop offset="0.0833" stop-color="#7a10d0"/><stop offset="0.1528" stop-color="#5000ff"/><stop offset="0.1944" stop-color="#0010ff"/><stop offset="0.2500" stop-color="#0090ff"/><stop offset="0.3000" stop-color="#00f0ff"/><stop offset="0.3389" stop-color="#00ff60"/><stop offset="0.3750" stop-color="#40ff00"/><stop offset="0.4167" stop-color="#90ff00"/><stop offset="0.5000" stop-color="#f0ff00"/><stop offset="0.5417" stop-color="#ffd800"/><stop offset="0.5833" stop-color="#ffa000"/><stop offset="0.6306" stop-color="#ff5000"/><stop offset="0.6722" stop-color="#ff1000"/><stop offset="0.7500" stop-color="#ff0000"/><stop offset="0.8333" stop-color="#e00000"/><stop offset="0.9167" stop-color="#980000"/><stop offset="1.0000" stop-color="#400000"/></linearGradient></defs><rect x="443" y="476" width="400" height="20" fill="url(#spec)"/><line x1="443.50" y1="347" x2="443.50" y2="480" stroke="#d6d6d6" stroke-width="1"/><line x1="476.83" y1="347" x2="476.83" y2="480" stroke="#d6d6d6" stroke-width="1"/><line x1="510.17" y1="347" x2="510.17" y2="480" stroke="#d6d6d6" stroke-width="1"/><line x1="543.50" y1="347" x2="543.50" y2="480" stroke="#d6d6d6" stroke-width="1"/><line x1="576.83" y1="347" x2="576.83" y2="480" stroke="#d6d6d6" stroke-width="1"/><line x1="610.17" y1="347" x2="610.17" y2="480" stroke="#d6d6d6" stroke-width="1"/><line x1="643.50" y1="347" x2="643.50" y2="480" stroke="#d6d6d6" stroke-width="1"/><line x1="676.83" y1="347" x2="676.83" y2="480" stroke="#d6d6d6" stroke-width="1"/><line x1="710.17" y1="347" x2="710.17" y2="480" stroke="#d6d6d6" stroke-width="1"/><line x1="743.50" y1="347" x2="743.50" y2="480" stroke="#d6d6d6" stroke-width="1"/><line x1="776.83" y1="347" x2="776.83" y2="480" stroke="#d6d6d6" stroke-width="1"/><line x1="810.17" y1="347" x2="810.17" y2="480" stroke="#d6d6d6" stroke-width="1"/><line x1="843.50" y1="347" x2="843.50" y2="480" stroke="#d6d6d6" stroke-width="1"/><line x1="443" y1="347.5" x2="844" y2="347.5" stroke="#d6d6d6" stroke-width="1"/><line x1="443" y1="379.5" x2="844" y2="379.5" stroke="#d6d6d6" stroke-width="1"/><line x1="443" y1="411.5" x2="844" y2="411.5" stroke="#d6d6d6" stroke-width="1"/><line x1="443" y1="443.5" x2="844" y2="443.5" stroke="#d6d6d6" stroke-width="1"/><line x1="443" y1="475.5" x2="844" y2="475.5" stroke="#d6d6d6" stroke-width="1"/><path d="M476,441.5 C477.5,441.8 481.0,442.7 485,443 C489.0,443.3 490.8,443.2 500,443.5 C509.2,443.8 530.0,444.4 540,444.5 C550.0,444.6 554.0,444.2 560,444 C566.0,443.8 571.8,443.3 576,443 C580.2,442.7 581.8,442.2 585,442 C588.2,441.8 592.0,441.5 595,442 C598.0,442.5 600.7,443.8 603,445 C605.3,446.2 606.2,447.9 609,449 C611.8,450.1 614.3,451.0 620,451.5 C625.7,452.0 636.3,451.9 643,452 C649.7,452.1 656.3,452.2 660,452 C663.7,451.8 662.3,452.1 665,450.5 C667.7,448.9 672.7,445.2 676,442.5 C679.3,439.8 681.8,436.8 685,434 C688.2,431.2 691.7,427.9 695,425.5 C698.3,423.1 702.2,420.7 705,419.5 C707.8,418.3 709.5,418.7 712,418.5 C714.5,418.3 716.2,418.3 720,418.3 C723.8,418.3 731.2,418.3 735,418.5 C738.8,418.7 738.8,419.4 743,419.5 C747.2,419.6 754.5,419.8 760,419 C765.5,418.2 769.3,416.4 776,415 C782.7,413.6 794.3,411.3 800,410.5 C805.7,409.7 806.3,410.1 810,410 C813.7,409.9 820.0,410.0 822,410" fill="none" stroke="#3ccf3c" stroke-width="1.1"/><path d="M476,445 C477.5,444.8 481.0,443.7 485,443.5 C489.0,443.3 494.2,443.6 500,443.8 C505.8,444.0 513.3,444.3 520,444.5 C526.7,444.7 533.3,444.8 540,445 C546.7,445.2 554.0,445.2 560,445.5 C566.0,445.8 571.0,446.1 576,446.5 C581.0,446.9 584.5,447.4 590,448 C595.5,448.6 603.2,449.6 609,450 C614.8,450.4 619.3,450.5 625,450.5 C630.7,450.5 638.0,450.2 643,450 C648.0,449.8 651.3,449.9 655,449.5 C658.7,449.1 661.5,448.8 665,447.5 C668.5,446.2 671.8,444.2 676,442 C680.2,439.8 686.0,436.4 690,434 C694.0,431.6 696.8,429.3 700,427.5 C703.2,425.7 705.7,424.2 709,423 C712.3,421.8 715.7,421.1 720,420.5 C724.3,419.9 731.2,419.8 735,419.5 C738.8,419.2 738.8,419.3 743,418.5 C747.2,417.7 754.5,416.1 760,414.5 C765.5,412.9 769.3,410.8 776,409 C782.7,407.2 794.3,405.4 800,404 C805.7,402.6 806.3,401.2 810,400.5 C813.7,399.8 820.0,399.7 822,399.5" fill="none" stroke="#a4262a" stroke-width="1.1"/></svg>
<div class="a t" style="right:483px;top:342px;font-family:'Liberation Mono',monospace;letter-spacing:-1.2px;font-size:12px;-webkit-text-stroke:0;color:#303030">100.00%</div>
<div class="a t" style="right:483px;top:374px;font-family:'Liberation Mono',monospace;letter-spacing:-1.2px;font-size:12px;-webkit-text-stroke:0;color:#303030">75.00%</div>
<div class="a t" style="right:483px;top:406px;font-family:'Liberation Mono',monospace;letter-spacing:-1.2px;font-size:12px;-webkit-text-stroke:0;color:#303030">50.00%</div>
<div class="a t" style="right:483px;top:438px;font-family:'Liberation Mono',monospace;letter-spacing:-1.2px;font-size:12px;-webkit-text-stroke:0;color:#303030">25.00%</div>
<div class="a t" style="right:483px;top:470px;font-family:'Liberation Mono',monospace;letter-spacing:-1.2px;font-size:12px;-webkit-text-stroke:0;color:#303030">0.00%</div>
<div class="a t" style="left:433.0px;width:20px;text-align:center;top:481px;font-family:'Liberation Mono',monospace;letter-spacing:-1.2px;font-size:12px;-webkit-text-stroke:0;color:rgba(40,40,40,.55)">370</div>
<div class="a t" style="left:466.3px;width:20px;text-align:center;top:481px;font-family:'Liberation Mono',monospace;letter-spacing:-1.2px;font-size:12px;-webkit-text-stroke:0;color:rgba(40,40,40,.55)">400</div>
<div class="a t" style="left:499.7px;width:20px;text-align:center;top:481px;font-family:'Liberation Mono',monospace;letter-spacing:-1.2px;font-size:12px;-webkit-text-stroke:0;color:rgba(40,40,40,.55)">430</div>
<div class="a t" style="left:533.0px;width:20px;text-align:center;top:481px;font-family:'Liberation Mono',monospace;letter-spacing:-1.2px;font-size:12px;-webkit-text-stroke:0;color:rgba(40,40,40,.55)">460</div>
<div class="a t" style="left:566.3px;width:20px;text-align:center;top:481px;font-family:'Liberation Mono',monospace;letter-spacing:-1.2px;font-size:12px;-webkit-text-stroke:0;color:rgba(40,40,40,.55)">490</div>
<div class="a t" style="left:599.7px;width:20px;text-align:center;top:481px;font-family:'Liberation Mono',monospace;letter-spacing:-1.2px;font-size:12px;-webkit-text-stroke:0;color:rgba(40,40,40,.55)">520</div>
<div class="a t" style="left:633.0px;width:20px;text-align:center;top:481px;font-family:'Liberation Mono',monospace;letter-spacing:-1.2px;font-size:12px;-webkit-text-stroke:0;color:rgba(40,40,40,.55)">550</div>
<div class="a t" style="left:666.3px;width:20px;text-align:center;top:481px;font-family:'Liberation Mono',monospace;letter-spacing:-1.2px;font-size:12px;-webkit-text-stroke:0;color:rgba(40,40,40,.55)">580</div>
<div class="a t" style="left:699.7px;width:20px;text-align:center;top:481px;font-family:'Liberation Mono',monospace;letter-spacing:-1.2px;font-size:12px;-webkit-text-stroke:0;color:rgba(40,40,40,.55)">610</div>
<div class="a t" style="left:733.0px;width:20px;text-align:center;top:481px;font-family:'Liberation Mono',monospace;letter-spacing:-1.2px;font-size:12px;-webkit-text-stroke:0;color:rgba(40,40,40,.55)">640</div>
<div class="a t" style="left:766.3px;width:20px;text-align:center;top:481px;font-family:'Liberation Mono',monospace;letter-spacing:-1.2px;font-size:12px;-webkit-text-stroke:0;color:rgba(40,40,40,.55)">670</div>
<div class="a t" style="left:799.7px;width:20px;text-align:center;top:481px;font-family:'Liberation Mono',monospace;letter-spacing:-1.2px;font-size:12px;-webkit-text-stroke:0;color:rgba(40,40,40,.55)">700</div>
<div class="a t" style="left:833.0px;width:20px;text-align:center;top:481px;font-family:'Liberation Mono',monospace;letter-spacing:-1.2px;font-size:12px;-webkit-text-stroke:0;color:rgba(40,40,40,.55)">730</div>
<div class="a" style="left:550px;top:316px;width:7px;height:7px;background:#c8141e;border:1px solid #401010"></div>
<div class="a t" style="left:560px;top:312px;color:#2a2a2a">目标光谱</div>
<div class="a" style="left:619px;top:316px;width:7px;height:7px;background:#44d444;border:1px solid #204020"></div>
<div class="a t" style="left:629px;top:312px;color:#2a2a2a">模拟光谱</div>
<div class="a" style="left:437px;top:299px;width:444px;height:222px;border:3px solid #d8282a;border-radius:4px"></div>
<div class="a" style="left:17px;top:545px;width:62px;height:22px;border-radius:3px;border:1px solid #28558a;background:linear-gradient(#3f7fc0,#3270b2 45%,#2a64a6)"></div>
<div class="a t" style="left:33px;top:551px;font-family:'Liberation Mono',monospace;letter-spacing:-1.2px;font-size:12px;-webkit-text-stroke:0;font-weight:bold;color:#fff">Reset</div>
<div class="a" style="left:86px;top:546px;width:743px;height:20px;border:1px solid #9aa69a;border-radius:2px;background:linear-gradient(#d8f8d8 0,#c8f6c8 2px,#a8eea8 5px,#90e890 6px,#10c828 7px,#04d020 12px,#10c020 17px,#30b040 19px)"></div>
<div class="a t" style="left:448px;top:553px;font-family:'Liberation Mono',monospace;letter-spacing:-1.2px;font-size:12px;-webkit-text-stroke:0;color:#fff;font-size:12px">4/4</div>
<div class="a" style="left:835px;top:544px;width:62px;height:24px;border-radius:4px;border:1px solid #5e7284;background:linear-gradient(#fdfeff,#f6f9fc)"></div>
<div class="a t" style="left:856px;top:552px;font-family:'Liberation Mono',monospace;letter-spacing:-1.2px;font-size:12px;-webkit-text-stroke:0;font-weight:normal;color:#2a4866">Pre</div>
<div class="a" style="left:104px;top:583px;width:97px;height:30px;border:1px solid #9a9a9a;border-top:1px solid #a8a8a8;background:linear-gradient(#e8e8e8,#d8d8d8)"></div>
<div class="a" style="left:3px;top:583px;width:101px;height:32px;background:#fff;border-bottom:1px solid #8a8a8a"></div>
<div class="a t" style="left:42px;top:593px">配色管理</div>
<div class="a t" style="left:143px;top:593px">色料管理</div>
<svg class="a" style="left:14px;top:585px" width="26" height="25" viewBox="0 0 26 25">
<defs><clipPath id="cm2"><circle cx="12.7" cy="9.2" r="7.6"/></clipPath><clipPath id="cy2"><circle cx="8.2" cy="17" r="7.1"/></clipPath></defs>
<circle cx="8.2" cy="17" r="7.1" fill="#fcd000"/><circle cx="17" cy="17" r="7.1" fill="#16a4e4"/><circle cx="12.7" cy="9.2" r="7.6" fill="#ea1e7e"/>
<g clip-path="url(#cm2)"><circle cx="8.2" cy="17" r="7.1" fill="#f47a20"/><circle cx="17" cy="17" r="7.1" fill="#9a48c8"/></g>
<g clip-path="url(#cy2)"><circle cx="17" cy="17" r="7.1" fill="#20b048"/></g>
<g clip-path="url(#cm2)"><g clip-path="url(#cy2)"><circle cx="17" cy="17" r="7.1" fill="#404040"/></g></g></svg>
<svg class="a" style="left:112px;top:584px" width="28" height="26" viewBox="0 0 26 25"><circle cx="6.5" cy="6.5" r="2" fill="#4aa8b0"/><circle cx="11" cy="3.5" r="2" fill="#6a70a8"/><circle cx="17" cy="3.5" r="2.2" fill="#8a84a8"/><circle cx="22" cy="7" r="2.1" fill="#8a50b8"/><circle cx="24" cy="12" r="2" fill="#b070c0"/>
<circle cx="3.5" cy="11.5" r="2" fill="#40c060"/><circle cx="3.5" cy="16.5" r="2" fill="#90e060"/>
<path d="M6.5 9 L7 22" stroke="#983030" stroke-width="1.3"/>
<path d="M7 9.5 C10 8 13 9 16 9 L14 12.5 C11 12.5 9 12.5 7 13.5 Z" fill="#b81414"/>
<path d="M13 14 L19.5 10.5 L25 18 L18.5 22.5 Z" fill="#f0c830"/><path d="M13 14 L18.5 22.5 L15 23.5 L10.5 16Z" fill="#e4e4ec"/>
<ellipse cx="8.5" cy="23.2" rx="5" ry="1.4" fill="#a01424"/></svg>
<div class="a" style="left:776px;top:618px;width:58px;height:16px;background:#0b840b"></div>
<div class="a t" style="left:781px;top:620px;color:#1c301c">测色设备</div>
<svg class="a" style="left:835px;top:617px" width="14" height="17" viewBox="0 0 14 17"><path d="M7 2 V14 M7 11 L2.5 7.5 V6 M7 9.5 L11.5 6.5 V5" fill="none" stroke="#5a5aa0" stroke-width="1.1"/><circle cx="7" cy="14.5" r="1.6" fill="#fff" stroke="#5a5aa0"/><rect x="1.3" y="4.3" width="2.6" height="2.2" fill="#fff" stroke="#5a5aa0" stroke-width=".9"/><circle cx="11.5" cy="4.5" r="1.3" fill="#fff" stroke="#5a5aa0" stroke-width=".9"/><path d="M5.5 2.5 L7 0.5 L8.5 2.5Z" fill="#5a5aa0"/></svg>
<div class="a t" style="left:857px;top:621px;font-family:'Liberation Mono',monospace;letter-spacing:-1.2px;font-size:12px;-webkit-text-stroke:0">[COM4]</div>
<div class="a" style="left:896px;top:617px;width:1px;height:17px;background:#d8d8d8"></div>
<svg class="a" style="left:903px;top:624px" width="10" height="10"><g fill="#b0b0b0"><rect x="7" y="1" width="2" height="2"/><rect x="7" y="4" width="2" height="2"/><rect x="7" y="7" width="2" height="2"/><rect x="4" y="4" width="2" height="2"/><rect x="4" y="7" width="2" height="2"/><rect x="1" y="7" width="2" height="2"/></g></svg>
<svg class="a" style="left:0;top:0;pointer-events:none" width="921" height="640"><text x="0" y="0" font-family="Liberation Sans" font-weight="bold" font-size="48" fill="none" stroke="rgba(150,150,150,.14)" stroke-width="1.4" transform="translate(690 640) rotate(-37)">chem17.com</text><clipPath id="wmc"><rect x="0" y="73" width="921" height="510"/></clipPath><g clip-path="url(#wmc)"><text x="0" y="0" font-family="Liberation Sans" font-weight="bold" font-size="48" fill="none" stroke="rgba(150,150,150,.12)" stroke-width="1.4" transform="translate(4 178) rotate(-52)">chem17.com</text></g></svg>

</body></html>
